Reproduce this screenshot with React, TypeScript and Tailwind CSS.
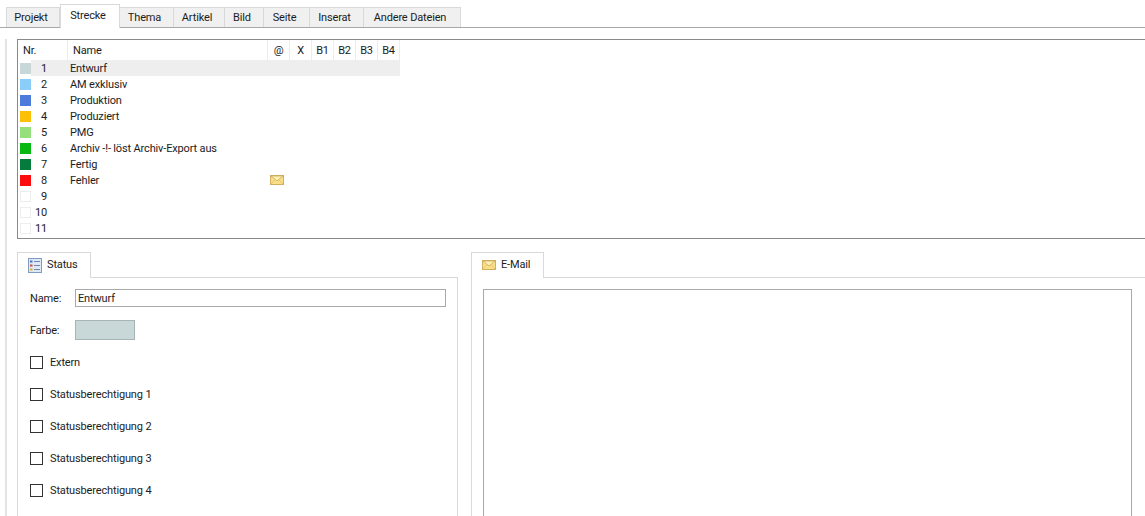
import React from "react";

const tabs = [
  { label: "Projekt", w: "w-[54px]" },
  { label: "Strecke", w: "w-[60px]", active: true },
  { label: "Thema", w: "w-[54px]" },
  { label: "Artikel", w: "w-[51px]" },
  { label: "Bild", w: "w-[39px]" },
  { label: "Seite", w: "w-[46px]" },
  { label: "Inserat", w: "w-[54px]" },
  { label: "Andere Dateien", w: "w-[97px]" },
];

const rows = [
  { n: 1, name: "Entwurf", c: "bg-[#c8d8d8]" },
  { n: 2, name: "AM exklusiv", c: "bg-[#8bcdf9]" },
  { n: 3, name: "Produktion", c: "bg-[#4d7bdc]" },
  { n: 4, name: "Produziert", c: "bg-[#fdc008]" },
  { n: 5, name: "PMG", c: "bg-[#95e07c]" },
  { n: 6, name: "Archiv -!- löst Archiv-Export aus", c: "bg-[#06b80f]" },
  { n: 7, name: "Fertig", c: "bg-[#067c3c]" },
  { n: 8, name: "Fehler", c: "bg-[#fb0d0d]", mail: true },
  { n: 9, name: "", c: "" },
  { n: 10, name: "", c: "" },
  { n: 11, name: "", c: "" },
];

const cols = ["@", "X", "B1", "B2", "B3", "B4"];
const perms = ["Extern", "Statusberechtigung 1", "Statusberechtigung 2", "Statusberechtigung 3", "Statusberechtigung 4"];

function Mail({ className }: { className?: string }) {
  return (
    <svg viewBox="0 0 14 10" className={className}>
      <rect x="0.5" y="0.5" width="13" height="9" fill="#fbdf86" stroke="#d0b060" />
      <path d="M1 1 L7 6 L13 1 Z" fill="#fff0b8" stroke="#c9a95c" strokeWidth="0.8" />
      <path d="M1 9 L5 4.8 M13 9 L9 4.8" fill="none" stroke="#d8bc74" strokeWidth="0.7" />
    </svg>
  );
}

function StatusIcon() {
  return (
    <svg viewBox="0 0 14 15" className="w-[14px] h-[15px] shrink-0">
      <rect x="0.5" y="0.5" width="13" height="14" fill="#dfe9f6" stroke="#7f9dc4" />
      <rect x="2" y="2.5" width="2.5" height="2" fill="#4a6fd0" />
      <rect x="2" y="6.5" width="2.5" height="2" fill="#d24a4a" />
      <rect x="2" y="10.5" width="2.5" height="2" fill="#e0b030" />
      <path d="M6 3.5h6M6 7.5h6M6 11.5h6" stroke="#6f87a8" strokeWidth="1" />
    </svg>
  );
}

export default function App() {
  return (
    <div className="w-[1145px] h-[516px] overflow-hidden bg-white text-[11px] tracking-[-0.15px] leading-[16px] text-[#1c1c1c] font-['Roboto','Noto_Sans',sans-serif] pt-[4px]">
      {/* main tab strip */}
      <div className="flex items-end h-[24px] pl-[6px] border-b border-[#a8a8a8]">
        {tabs.map((t) =>
          t.active ? (
            <div
              key={t.label}
              className={`${t.w} h-[24px] -mb-px pb-[2px] pr-[4px] relative z-10 flex items-center justify-center bg-white border border-b-0 border-[#d9d9d9]`}
            >
              {t.label}
            </div>
          ) : (
            <div
              key={t.label}
              className={`${t.w} h-[20px] pr-[4px] flex items-center justify-center bg-[#f0f0f0] border-t border-r border-[#d9d9d9] first:border-l`}
            >
              {t.label}
            </div>
          )
        )}
      </div>

      <div className="ml-[5px] border-l-2 border-[#e4e4e4] pl-[10px] h-[488px]">
        {/* list */}
        <div className="mt-[11px] h-[200px] border border-r-0 border-[#8a8a8a]">
          <div className="flex h-[20px] items-center">
            <div className="w-[50px] h-full pl-[5px] pt-[1px] flex items-center border-r border-[#ececec]">Nr.</div>
            <div className="w-[200px] h-full pl-[5px] pt-[1px] flex items-center border-r border-[#ececec]">Name</div>
            {cols.map((c) => (
              <div key={c} className="w-[22px] h-full pt-[1px] flex items-center justify-center border-r border-[#ececec]">
                {c}
              </div>
            ))}
          </div>
          {rows.map((r) => (
            <div key={r.n} className="flex h-[16px] items-center">
              <div className="w-[13px] h-full flex items-center justify-end">
                <div className={`w-[11px] h-[11px] ${r.c || "border border-[#ededed]"}`} />
              </div>
              <div className={`flex items-center w-[369px] h-full ${r.n === 1 ? "bg-[#eeeeee]" : ""}`}>
                <div className="w-[16px] h-full pt-[1px] text-right">{r.n}</div>
                <div className="ml-[23px] w-[199px] h-full pt-[1px] truncate">{r.name}</div>
                {r.mail ? <Mail className="w-[14px] h-[10px] ml-[1px]" /> : null}
              </div>
            </div>
          ))}
        </div>

        {/* lower panels */}
        <div className="flex mt-[13px] items-start">
          <div className="w-[441px] shrink-0">
            <div className="w-[74px] h-[26px] -mb-px relative z-10 flex items-center gap-[5px] pl-[10px] pb-[1px] bg-white border border-b-0 border-[#d9d9d9]">
              <StatusIcon />
              <span>Status</span>
            </div>
            <div className="h-[300px] border border-[#d9d9d9] pt-[11px] pl-[12px] pr-[11px]">
              <div className="flex items-center h-[18px]">
                <span className="w-[45px] pt-[1px]">Name:</span>
                <div className="flex-1 h-[18px] border border-[#a9a9a9] pl-[2px] pt-[1px] flex items-center">Entwurf</div>
              </div>
              <div className="flex items-center h-[20px] mt-[13px]">
                <span className="w-[45px] pt-[1px]">Farbe:</span>
                <div className="w-[60px] h-[20px] bg-[#c8d8d8] border border-[#a9b5b5]" />
              </div>
              <div className="flex flex-col gap-[19px] mt-[16px]">
                {perms.map((p) => (
                  <div key={p} className="flex items-start h-[13px] gap-[7px]">
                    <div className="w-[13px] h-[13px] border border-[#333333] shrink-0" />
                    <span className="-mt-[1px]">{p}</span>
                  </div>
                ))}
              </div>
            </div>
          </div>
          <div className="ml-[13px] flex-1 min-w-0">
            <div className="w-[73px] h-[26px] -mb-px relative z-10 flex items-center gap-[5px] pl-[10px] pb-[1px] bg-white border border-b-0 border-[#d9d9d9]">
              <Mail className="w-[14px] h-[10px] shrink-0" />
              <span>E-Mail</span>
            </div>
            <div className="h-[300px] border-l border-t border-[#d9d9d9] pt-[11px] pl-[11px] pr-[13px]">
              <div className="h-[280px] border border-[#a9a9a9]" />
            </div>
          </div>
        </div>
      </div>
    </div>
  );
}
